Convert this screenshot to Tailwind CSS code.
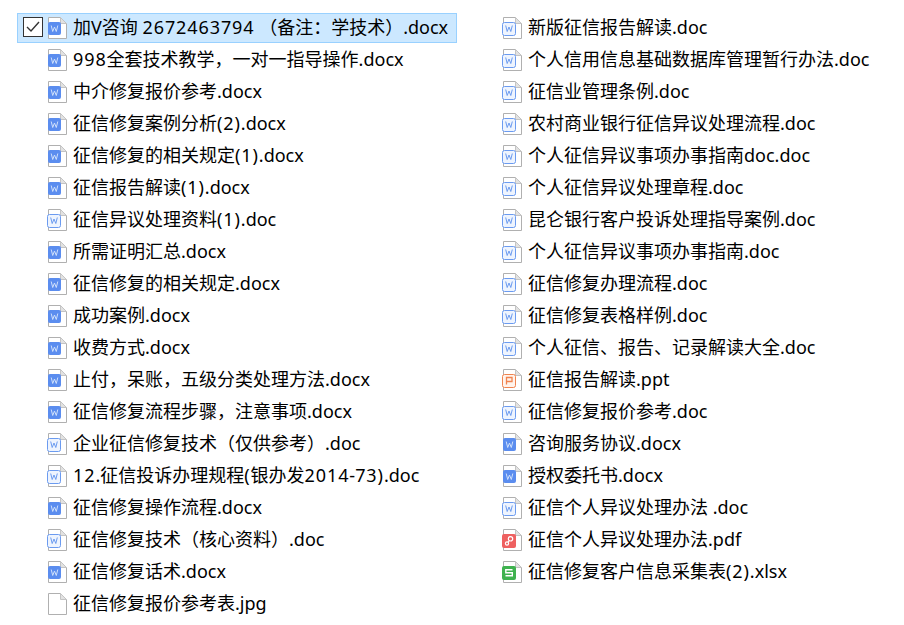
<!DOCTYPE html>
<html lang="en">
<head>
<meta charset="UTF-8">
<title>Files</title>
<script src="https://cdn.jsdelivr.net/npm/@tailwindcss/browser@4"></script>
</head>
<body class="bg-white w-[904px] h-[625px] overflow-hidden font-['Noto_Sans','Noto_Sans_CJK_SC',sans-serif] text-[18px] text-black">
<svg class="hidden">
  <symbol id="page" viewBox="0 0 20 24"><path d="M1.5 1.5H13.5L19.5 7.5V22.5H1.5Z" fill="#fff" stroke="#b0b0b0"/><path d="M13.5 1.5V7.5H19.5Z" fill="#e2e2e2" stroke="#c4c4c4"/></symbol>
  <symbol id="docx" viewBox="0 0 20 24"><use href="#page" width="20" height="24"/><rect x="1" y="6" width="13" height="13" rx="2" fill="#5b8def"/><path d="M4.2 9.5L5.7 15.5L7.5 11L9.3 15.5L10.8 9.5" fill="none" stroke="#cfe0fb" stroke-width="1"/></symbol>
  <symbol id="doc" viewBox="0 0 20 24"><use href="#page" width="20" height="24"/><rect x=".5" y="6.5" width="13" height="13" rx="2" fill="#eef4fe" stroke="#6b9bf0"/><path d="M3.7 9.5L5.2 15.5L7 11L8.8 15.5L10.3 9.5" fill="none" stroke="#6b9bf0" stroke-width="1"/></symbol>
  <symbol id="ppt" viewBox="0 0 20 24"><use href="#page" width="20" height="24"/><rect x=".5" y="6.5" width="13" height="13" rx="2" fill="#fff3ec" stroke="#f0834f"/><path d="M4.5 16.5V9.5H10V13.5H4.5" fill="none" stroke="#f0834f" stroke-width="1.3"/></symbol>
  <symbol id="pdf" viewBox="0 0 20 24"><use href="#page" width="20" height="24"/><rect x="0" y="6" width="14" height="14" rx="2" fill="#ee6060"/><circle cx="8.5" cy="10.8" r="2.2" fill="none" stroke="#fff" stroke-width="1.2"/><circle cx="5" cy="15.5" r="1.6" fill="none" stroke="#fff" stroke-width="1.2"/><path d="M6 14.3L7.3 12.6" stroke="#fff" stroke-width="1.2"/></symbol>
  <symbol id="xlsx" viewBox="0 0 20 24"><use href="#page" width="20" height="24"/><rect x="0" y="6" width="14" height="14" rx="2" fill="#3fb24f"/><path d="M10.5 9.8H3.8V12.8H10.3V15.8H3.5" fill="none" stroke="#fff" stroke-width="1.4"/></symbol>
</svg>
<div class="flex pt-[13px] pl-[17px]">
  <div id="left" class="flex flex-col gap-[2px] w-[455px] shrink-0"></div>
  <div id="right" class="flex flex-col gap-[2px] shrink-0"></div>
</div>
<script>
  const left = [
    ['docx','加V咨询 2672463794 （备注：学技术）.docx'],['docx','998全套技术教学，一对一指导操作.docx'],['docx','中介修复报价参考.docx'],
    ['docx','征信修复案例分析(2).docx'],['docx','征信修复的相关规定(1).docx'],['docx','征信报告解读(1).docx'],['doc','征信异议处理资料(1).doc'],
    ['docx','所需证明汇总.docx'],['docx','征信修复的相关规定.docx'],['docx','成功案例.docx'],['docx','收费方式.docx'],
    ['docx','止付，呆账，五级分类处理方法.docx'],['docx','征信修复流程步骤，注意事项.docx'],['doc','企业征信修复技术（仅供参考）.doc'],
    ['doc','12.征信投诉办理规程(银办发2014-73).doc'],['docx','征信修复操作流程.docx'],['doc','征信修复技术（核心资料）.doc'],['docx','征信修复话术.docx'],
    ['page','征信修复报价参考表.jpg']
  ];
  const right = [
    ['doc','新版征信报告解读.doc'],['doc','个人信用信息基础数据库管理暂行办法.doc'],['doc','征信业管理条例.doc'],['doc','农村商业银行征信异议处理流程.doc'],
    ['doc','个人征信异议事项办事指南doc.doc'],['doc','个人征信异议处理章程.doc'],['doc','昆仑银行客户投诉处理指导案例.doc'],['doc','个人征信异议事项办事指南.doc'],
    ['doc','征信修复办理流程.doc'],['doc','征信修复表格样例.doc'],['doc','个人征信、报告、记录解读大全.doc'],['ppt','征信报告解读.ppt'],
    ['doc','征信修复报价参考.doc'],['docx','咨询服务协议.docx'],['docx','授权委托书.docx'],['doc','征信个人异议处理办法 .doc'],
    ['pdf','征信个人异议处理办法.pdf'],['xlsx','征信修复客户信息采集表(2).xlsx']
  ];
  const check = '<span class="absolute left-[5px] top-[3px] w-[20px] h-[20px] border border-[#333] bg-white flex items-center justify-center"><svg width="14" height="12" viewBox="0 0 14 12"><path d="M1 6L5 10L13 1" fill="none" stroke="#333" stroke-width="1.4"/></svg></span>';
  // digits in the reference font are about 1px wider than Noto Sans
  function label(text) {
    return text.replace(/[\d()]/g, c => '<span class="tracking-[0.9px]">' + c + '</span>');
  }
  function row(item, selected) {
    const box = selected ? 'bg-[#cce8ff] border border-[#99d1ff]' : 'border border-transparent';
    return '<div class="relative h-[30px] w-[440px] flex items-center gap-[6px] pl-[29px] whitespace-nowrap ' + box + '">'
      + (selected ? check : '')
      + '<svg class="shrink-0" width="20" height="24"><use href="#' + item[0] + '"/></svg>'
      + '<span class="pb-[2px] leading-[28px]">' + label(item[1]) + '</span></div>';
  }
  document.getElementById('left').innerHTML = left.map((it, i) => row(it, i === 0)).join('');
  document.getElementById('right').innerHTML = right.map(it => row(it, false)).join('');
</script>
</body>
</html>
